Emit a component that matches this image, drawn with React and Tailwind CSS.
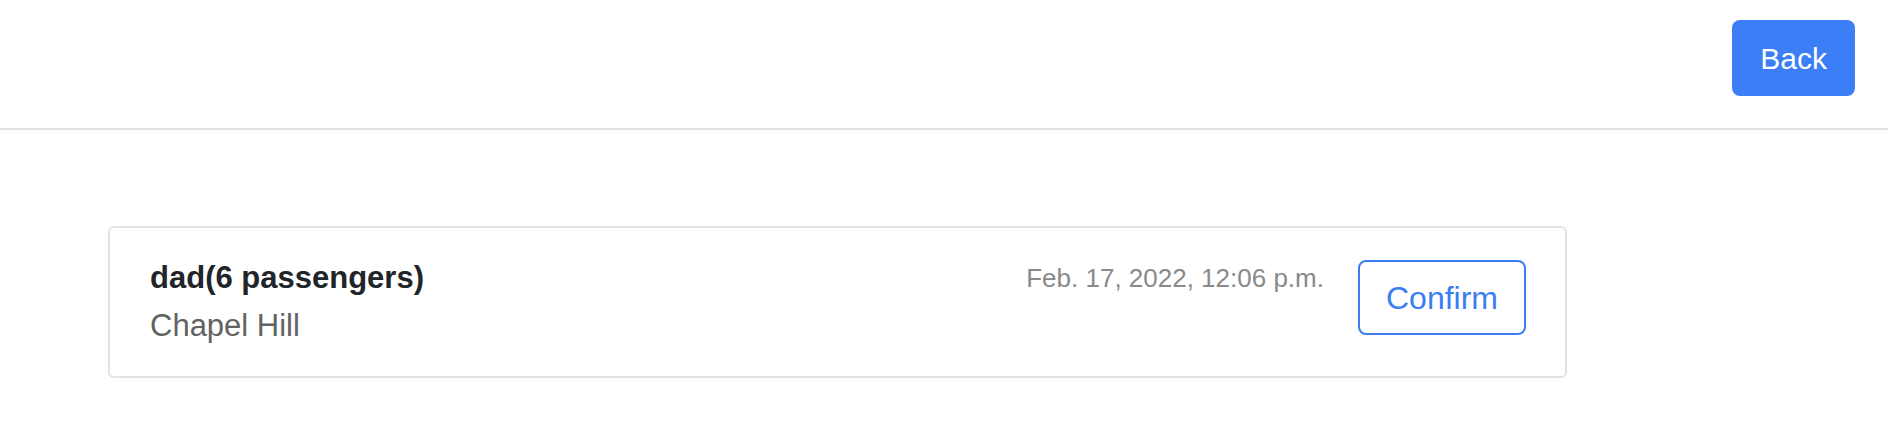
const rides = [
  { id: 1, name: 'dad', passengers: 6, place: 'Chapel Hill', time: 'Feb. 17, 2022, 12:06 p.m.' },
]

function RideCard({ ride }) {
  return (
    <div className="flex items-start justify-between rounded-[6px] border-2 border-[#e3e3e3] bg-white py-[26px] pl-[40px] pr-[39px]">
      <div>
        <div className="text-[31px] font-bold leading-[48px] text-[#212529]">
          {ride.name}({ride.passengers} passengers)
        </div>
        <div className="text-[31px] leading-[48px] text-[#626262]">{ride.place}</div>
      </div>
      <div className="mt-[6px] flex items-start gap-[34px]">
        <span className="text-[26px] leading-[36px] text-[#8a8a8a]">{ride.time}</span>
        <button className="flex h-[75px] items-center rounded-[8px] border-2 border-[#3b7ef2] px-[26px] text-[32px] text-[#3b7ef2]">
          Confirm
        </button>
      </div>
    </div>
  )
}

export default function App() {
  return (
    <div className="min-h-screen bg-white font-['Liberation_Sans',Arial,sans-serif]">
      {/* top bar */}
      <header className="flex justify-end border-b-2 border-[#e1e3e6] pb-[32px] pl-[33px] pr-[33px] pt-[20px]">
        <button className="flex h-[76px] items-center rounded-[8px] bg-[#3b7ef5] px-[28px] text-[30px] text-white">
          Back
        </button>
      </header>

      <main className="pl-[108px] pr-[321px] pt-[96px]">
        {rides.map((r) => (
          <RideCard key={r.id} ride={r} />
        ))}
      </main>
    </div>
  )
}
